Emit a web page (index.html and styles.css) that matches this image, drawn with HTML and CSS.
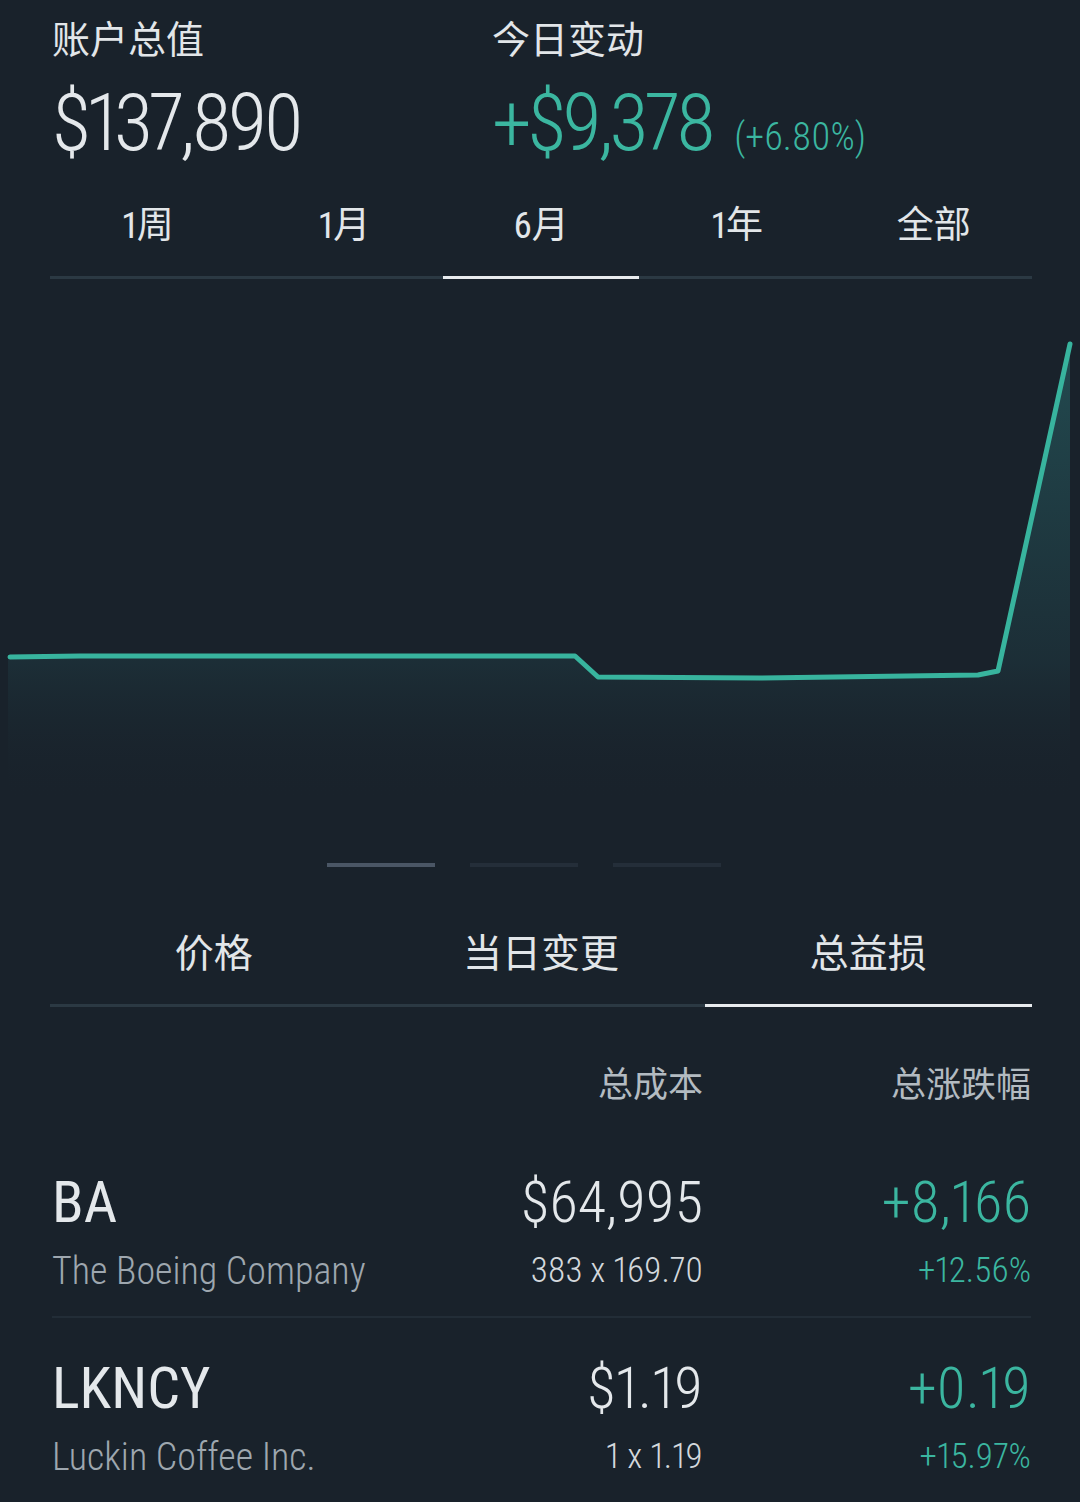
FILE: index.html
```html
<!DOCTYPE html>
<html lang="zh-CN">
<head>
  <meta charset="UTF-8" />
  <title>账户总值</title>
  <meta name="viewport" content="width=device-width, initial-scale=1.0" />
  <link rel="stylesheet" href="styles.css">
</head>
<body>
  <div class="summary">
    <div class="summary-item">
      <div class="summary-label">账户总值</div>
      <div class="summary-value">$137,890</div>
    </div>
    <div class="summary-item">
      <div class="summary-label">今日变动</div>
      <div class="summary-value up">+$9,378 <span class="pct">(+6.80%)</span></div>
    </div>
  </div>

  <div class="range-tabs">
    <div class="tab">1周</div>
    <div class="tab">1月</div>
    <div class="tab active">6月</div>
    <div class="tab">1年</div>
    <div class="tab">全部</div>
  </div>

  <svg class="chart" viewBox="0 278 1080 560" preserveAspectRatio="none">
    <defs>
      <linearGradient id="fill" x1="0" y1="340" x2="0" y2="800" gradientUnits="userSpaceOnUse">
        <stop offset="0" stop-color="#2a6b6e" stop-opacity="0.55" />
        <stop offset="0.7" stop-color="#1f3a42" stop-opacity="0.5" />
        <stop offset="1" stop-color="#19222b" stop-opacity="0" />
      </linearGradient>
    </defs>
    <polygon fill="url(#fill)" points="8,656 575,655 598,676 978,674 998,670 1070,343 1070,800 8,800" />
    <polyline fill="none" stroke="#38b49e" stroke-width="5" stroke-linejoin="round" stroke-linecap="round"
      points="10,656 80,655 575,655 598,676 760,677 978,674 998,670 1070,343" />
  </svg>

  <div class="pager">
    <span class="dot on"></span>
    <span class="dot"></span>
    <span class="dot"></span>
  </div>

  <div class="view-tabs">
    <div class="tab">价格</div>
    <div class="tab">当日变更</div>
    <div class="tab active">总益损</div>
  </div>

  <div class="holdings">
    <div class="head">
      <span></span>
      <span class="num">总成本</span>
      <span class="num">总涨跌幅</span>
    </div>

    <div class="row">
      <div class="sym">BA</div>
      <div class="big num">$64,995</div>
      <div class="big num up">+8,166</div>
      <div class="name">The Boeing Company</div>
      <div class="small num">383 x 169.70</div>
      <div class="small num up">+12.56%</div>
    </div>

    <div class="row">
      <div class="sym">LKNCY</div>
      <div class="big num">$1.19</div>
      <div class="big num up">+0.19</div>
      <div class="name">Luckin Coffee Inc.</div>
      <div class="small num">1 x 1.19</div>
      <div class="small num up">+15.97%</div>
    </div>
  </div>
</body>
</html>
```

FILE: styles.css
```css
* {
  box-sizing: border-box;
}

html, body {
  margin: 0;
  padding: 0;
  overflow-x: hidden;
}

body {
  font-family: "Roboto Condensed", "Liberation Sans Narrow", "DejaVu Sans Condensed", "Noto Sans CJK SC", sans-serif;
  font-variant-numeric: proportional-nums;
  background: #19222b;
  color: #e4e8eb;
  width: 1080px;
  min-height: 1502px;
}

/* summary */
.summary {
  display: flex;
  padding: 15px 0 0 52px;
}

.summary-item {
  width: 440px;
}

.summary-label {
  font-family: "Noto Sans CJK SC", sans-serif;
  font-size: 38px;
  line-height: 44px;
  color: #e2e6e9;
}

.summary-value {
  margin-top: 22px;
  font-size: 80px;
  line-height: 84px;
  font-weight: 300;
  letter-spacing: -4px;
  white-space: nowrap;
}

.summary-value .pct {
  font-size: 38px;
  letter-spacing: 0;
  margin-left: 8px;
}

/* tabs */
.range-tabs,
.view-tabs {
  display: flex;
  margin: 0 48px 0 50px;
  border-bottom: 3px solid #2b3943;
}

.range-tabs {
  margin-top: 1px;
}

.tab {
  flex: 1;
  text-align: center;
  font-family: "Roboto Condensed", "Liberation Sans Narrow", "Noto Sans CJK SC", sans-serif;
  font-size: 37px;
  line-height: 48px;
  padding: 22px 0 26px;
  color: #e2e6e9;
}

.tab.active {
  border-bottom: 3px solid #e8ebee;
  margin-bottom: -3px;
}

.view-tabs {
  margin-top: 34px;
}

.view-tabs .tab {
  font-size: 39px;
  padding: 29px 0 26px;
}

/* chart */
.chart {
  display: block;
  width: 1080px;
  height: 560px;
}

.pager {
  display: flex;
  justify-content: center;
  gap: 35px;
  padding: 24px 32px 0 0;
}

.dot {
  width: 108px;
  height: 4px;
  background: #242e39;
}

.dot.on {
  background: #4a5665;
}

/* holdings */
.holdings {
  margin: 0 49px 0 52px;
}

.head,
.row {
  display: grid;
  grid-template-columns: 1fr 300px 328px;
}

.head {
  margin-top: 53px;
  font-family: "Noto Sans CJK SC", sans-serif;
  font-size: 35px;
  line-height: 44px;
  color: #b3bbc1;
  padding-bottom: 28px;
}

.num {
  text-align: right;
}

.row {
  padding: 35px 0 21px;
  border-bottom: 2px solid #222d37;
  row-gap: 10px;
}

.row:last-child {
  border-bottom: none;
}

.sym,
.big {
  font-size: 58px;
  line-height: 70px;
  font-weight: 300;
  white-space: nowrap;
}

.sym {
  font-weight: 400;
}

.name,
.small {
  font-size: 35px;
  line-height: 48px;
  font-weight: 300;
  white-space: nowrap;
}

.name {
  font-size: 38px;
  color: #9ea7af;
}

.small {
  color: #d3d8dc;
}

.up,
.small.up {
  color: #3bb6a0;
}
```
